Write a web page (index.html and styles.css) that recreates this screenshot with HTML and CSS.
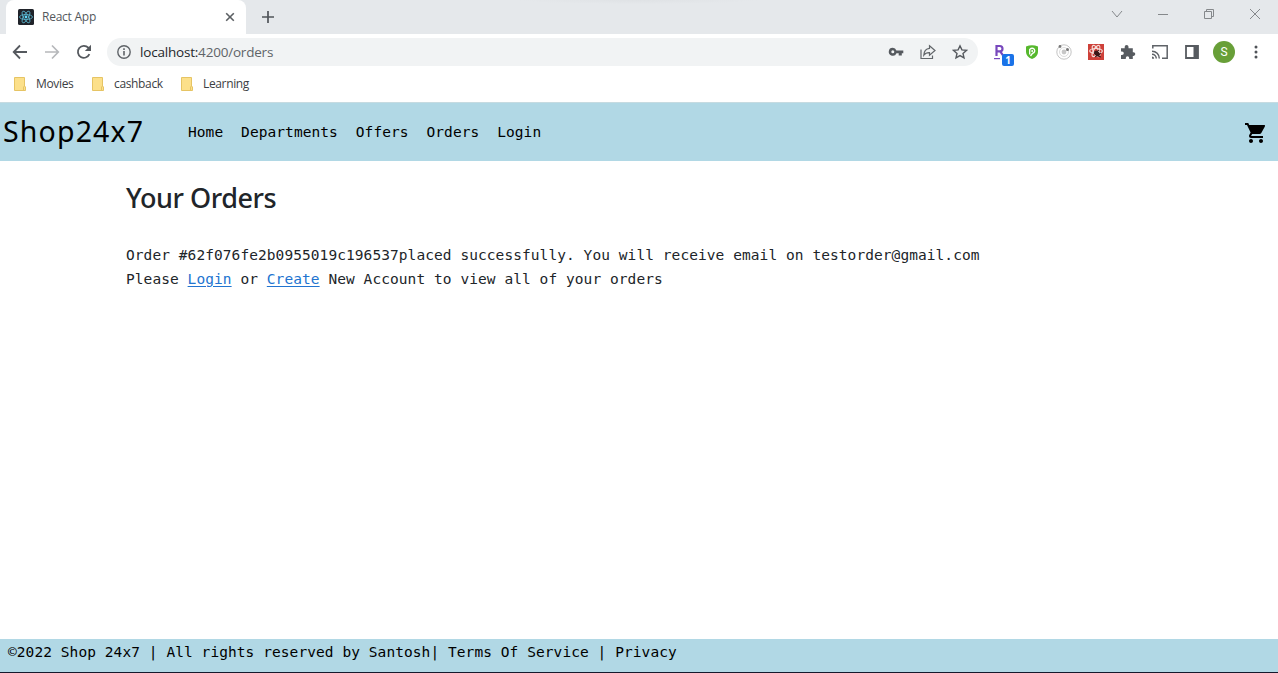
FILE: index.html
```html
<!DOCTYPE html>
<html lang="en">
<head>
<meta charset="utf-8">
<title>React App</title>
<link rel="stylesheet" href="styles.css">
</head>
<body>
<div class="tabstrip">
  <div class="tab">
    <svg class="favicon" width="16" height="16" viewBox="0 0 16 16"><rect width="16" height="16" rx="1.5" fill="#20232a"/><g fill="none" stroke="#58b3cb" stroke-width=".85"><ellipse cx="8" cy="8" rx="6.5" ry="2.5"/><ellipse cx="8" cy="8" rx="6.5" ry="2.5" transform="rotate(60 8 8)"/><ellipse cx="8" cy="8" rx="6.5" ry="2.5" transform="rotate(120 8 8)"/></g><circle cx="8" cy="8" r="1.4" fill="#61dafb"/></svg>
    <span class="tab-title">React App</span>
    <svg class="tab-close" width="10" height="10" viewBox="0 0 10 10"><path d="M1.2 1.2l7.6 7.6M8.8 1.2L1.2 8.8" stroke="#5b5f63" stroke-width="1.6"/></svg>
  </div>
  <svg class="new-tab" width="12" height="12" viewBox="0 0 12 12"><path d="M6 0v12M0 6h12" stroke="#50545a" stroke-width="1.7"/></svg>
  <div class="window-controls">
    <svg width="12" height="12" viewBox="0 0 12 12"><path d="M1 3l5 6 5-6" /></svg>
    <svg width="12" height="12" viewBox="0 0 12 12"><path d="M1 6.5h10" /></svg>
    <svg width="12" height="12" viewBox="0 0 12 12"><path d="M1.5 3.5h7v7h-7zM3.5 3.500v-2h7v7h-2" /></svg>
    <svg width="12" height="12" viewBox="0 0 12 12"><path d="M1 1l10 10M11 1L1 11" /></svg>
  </div>
</div>
<div class="toolbar">
  <div class="nav-buttons">
    <svg width="16" height="16" viewBox="0 0 16 16"><path d="M15 8H2M8 1.500L1.700 8 8 14.500" fill="none" stroke="#55595e" stroke-width="1.800"/></svg>
    <svg width="16" height="16" viewBox="0 0 16 16"><path d="M1 8h13M8 1.500L14.300 8 8 14.500" fill="none" stroke="#b6b8bb" stroke-width="1.700"/></svg>
    <svg width="16" height="16" viewBox="0 0 16 16"><path d="M13.400 10.200A6 6 0 1 1 12.300 3.700L14 5.500" fill="none" stroke="#55595e" stroke-width="1.800"/><path d="M15 .8V7H8.800z" fill="#55595e"/></svg>
  </div>
  <div class="omnibox">
    <svg width="14" height="14" viewBox="0 0 14 14"><circle cx="7" cy="7" r="6.200" fill="none" stroke="#5f6368" stroke-width="1.400"/><path d="M7 6v4.500M7 3.300v1.600" stroke="#5f6368" stroke-width="1.600"/></svg>
    <span class="url"><b>localhost:</b>4200/orders</span>
    <div class="omni-actions">
      <svg width="16" height="16" viewBox="0 0 16 16"><path fill="#55595e" fill-rule="evenodd" d="M4.800 3.800a4 4 0 1 0 3.700 5.400h2.200v2.200h3.100V9.200H15.300V6.400H8.400A4 4 0 0 0 4.800 3.800zm0 2.500a1.500 1.500 0 1 1 0 3 1.500 1.500 0 0 1 0-3z"/></svg>
      <svg width="16" height="16" viewBox="0 0 16 16"><g fill="none" stroke="#62666a" stroke-width="1.200"><path d="M1 5.500v9h11.500v-3"/><path d="M9.500 1.800L15 6.500l-5.500 4.700V8.600C7 8.500 5.200 9.200 3.800 11.200c.2-4 2.400-6.400 5.700-6.800z"/></g></svg>
      <svg width="16" height="16" viewBox="0 0 16 16"><path d="M8 1.800l1.900 4.100 4.500.5-3.400 3 1 4.500-4-2.300-4 2.300 1-4.500-3.400-3 4.500-.5z" fill="none" stroke="#55595e" stroke-width="1.400"/></svg>
    </div>
  </div>
  <div class="extensions">
    <div class="ext">
      <svg width="16" height="16" viewBox="0 0 16 16"><path d="M4.500 12V2h3.300a2.600 2.600 0 0 1 0 5.400H5.300M8.200 7.300l2.800 4" fill="none" stroke="#7848bd" stroke-width="2.200"/><path d="M2 14.600h6" stroke="#7848bd" stroke-width="1.200"/></svg>
      <span class="badge">1</span>
    </div>
    <div class="ext"><svg width="14" height="16" viewBox="0 0 14 16"><path d="M1 2.500Q7 .2 13 2.500V8q0 4.500-6 7Q1 12.500 1 8z" fill="#56b82d"/><path d="M4.700 10.500V5.500Q7 3.200 9.300 5.200 10.800 8 7.500 9.300L5.500 12" fill="none" stroke="#fff" stroke-width="1.300"/><circle cx="7.200" cy="7" r="1" fill="#fff"/></svg></div>
    <div class="ext"><svg width="16" height="16" viewBox="0 0 16 16"><g fill="none" stroke="#c4c4c4"><circle cx="8" cy="8" r="7.200"/><circle cx="8" cy="8" r="4.500" stroke="#ddd"/></g><circle cx="8" cy="8" r="2.400" fill="#c7c7c7"/><circle cx="4" cy="2.500" r="1.400" fill="#777"/><circle cx="11.500" cy="5.500" r="1.500" fill="#777"/></svg></div>
    <div class="ext"><svg width="16" height="16" viewBox="0 0 16 16"><path fill="#ce4039" d="M0 0h16v16H0z"/><g fill="none" stroke="#f5ddd9" stroke-width="1.200"><ellipse cx="8" cy="7" rx="6.300" ry="2.500"/><ellipse cx="8" cy="7" rx="6.300" ry="2.500" transform="rotate(60 8 7)"/><ellipse cx="8" cy="7" rx="6.300" ry="2.500" transform="rotate(120 8 7)"/></g><ellipse cx="9" cy="9.500" rx="2.400" ry="3.300" transform="rotate(-40 9 9.500)" fill="#3a1717"/><path d="M6 10l5-4M7 13l6-4M10 12l3 1" stroke="#3a1717"/></svg></div>
    <div class="ext"><svg width="16" height="16" viewBox="0 0 16 16"><path fill="#575b60" d="M1 4.200h3.700V2.800a1.900 1.900 0 0 1 3.800 0v1.400h4.300v4.100h.7a1.800 1.800 0 0 1 0 3.600h-.7V15H9.200v-1a1.700 1.700 0 0 0-3.400 0v1H1v-4h1a1.800 1.800 0 0 0 0-3.600H1z"/></svg></div>
    <div class="ext"><svg width="16" height="16" viewBox="0 0 16 16"><g fill="none" stroke="#5f6368" stroke-width="1.500"><path d="M.8 4.500V1.800h14.400v12.400H10"/><path d="M0 7.200a7.300 7.300 0 0 1 7.300 7.300M0 10.200a4.300 4.300 0 0 1 4.300 4.300"/></g><path d="M0 12.500a2.200 2.200 0 0 1 2.200 2.200H0z" fill="#5f6368"/></svg></div>
    <div class="ext"><svg width="14" height="14" viewBox="0 0 14 14"><path d="M1 1h12v12H1z" fill="#fff" stroke="#575b60" stroke-width="1.800"/><path d="M8.500 1H13v12H8.500z" fill="#575b60"/></svg></div>
    <div class="ext"><span class="avatar">S</span></div>
    <div class="ext"><svg width="4" height="14" viewBox="0 0 4 14"><g fill="#4f5358"><circle cx="2" cy="2" r="1.500"/><circle cx="2" cy="7" r="1.500"/><circle cx="2" cy="12" r="1.500"/></g></svg></div>
  </div>
</div>
<div class="bookmarks">
  <div class="bookmark bm-movies"><svg width="12" height="14" viewBox="0 0 12 14"><path d="M.5.5h10v8.500l1 1v3.500H.5z" fill="#fce08a" stroke="#e6c464"/><path d="M9.500 13V10l1-1" fill="none" stroke="#e6c464"/></svg><span>Movies</span></div>
  <div class="bookmark bm-cashback"><svg width="12" height="14" viewBox="0 0 12 14"><path d="M.5.5h10v8.500l1 1v3.500H.5z" fill="#fce08a" stroke="#e6c464"/><path d="M9.500 13V10l1-1" fill="none" stroke="#e6c464"/></svg><span>cashback</span></div>
  <div class="bookmark"><svg width="12" height="14" viewBox="0 0 12 14"><path d="M.5.5h10v8.500l1 1v3.500H.5z" fill="#fce08a" stroke="#e6c464"/><path d="M9.500 13V10l1-1" fill="none" stroke="#e6c464"/></svg><span>Learning</span></div>
</div>
<header class="site-header">
  <div class="brand">Shop24x7</div>
  <nav class="menu"><span>Home</span><span>Departments</span><span>Offers</span><span>Orders</span><span>Login</span></nav>
  <svg class="cart" width="24" height="24" viewBox="0 0 24 24"><path d="M7 18c-1.100 0-1.990.9-1.990 2S5.900 22 7 22s2-.9 2-2-.9-2-2-2zM1 2v2h2l3.600 7.590-1.350 2.450c-.16.280-.25.610-.25.960 0 1.100.9 2 2 2h12v-2H7.420c-.14 0-.25-.11-.25-.25l.03-.12.9-1.630h7.450c.75 0 1.410-.41 1.750-1.030l3.580-6.490A1 1 0 0 0 20 4H5.210l-.94-2H1zm16 16c-1.100 0-1.990.9-1.990 2s.89 2 1.990 2 2-.9 2-2-.9-2-2-2z"/></svg>
</header>
<main class="content">
  <h1>Your Orders</h1>
  <p>Order #62f076fe2b0955019c196537placed successfully. You will receive email on testorder@gmail.com</p>
  <p>Please <a href="#">Login</a> or <a href="#">Create</a> New Account to view all of your orders</p>
</main>
<footer class="site-footer">©2022 Shop 24x7 | All rights reserved by Santosh| Terms Of Service | Privacy</footer>
</body>
</html>
```

FILE: styles.css
```css
* { box-sizing: border-box; }
body { margin: 0; height: 673px; display: flex; flex-direction: column; overflow: hidden; background: #fff; font-family: "Noto Sans", sans-serif; }
svg { display: block; flex: none; }
.tabstrip { height: 34px; flex: none; display: flex; align-items: center; padding-left: 6px; background: radial-gradient(ellipse 120px 4px at 638px 0, #dfe2e5, transparent), #e5e8eb; }
.tab { width: 240px; height: 34px; display: flex; align-items: center; padding: 0 11px 0 12px; background: #fff; border-radius: 8px 8px 0 0; }
.tab-title { margin-left: 8px; font-family: "Open Sans", sans-serif; font-size: 12px; line-height: 16px; letter-spacing: -0.25px; color: #54585c; }
.tab-close { margin-left: auto; }
.new-tab { margin-left: 16px; }
.window-controls { margin-left: auto; display: flex; gap: 34px; padding: 0 17px 6px 0; }
.window-controls path { fill: none; stroke: #85888b; stroke-width: 1; }
.toolbar { height: 36px; flex: none; display: flex; align-items: center; padding-left: 12px; }
.nav-buttons { display: flex; gap: 16px; }
.omnibox { width: 871px; height: 28px; margin-left: 15px; display: flex; align-items: center; padding: 0 10px; border-radius: 14px; background: #f1f3f4; }
.url { margin-left: 9px; padding-bottom: 1px; font-family: "Open Sans", sans-serif; font-size: 13.500px; line-height: 18px; letter-spacing: -0.2px; color: #606468; }
.url b { font-weight: 400; color: #24272b; }
.omni-actions { margin-left: auto; display: flex; gap: 16px; }
.extensions { display: flex; margin-left: 6px; }
.ext { width: 32px; height: 28px; display: flex; align-items: center; justify-content: center; position: relative; }
.badge { position: absolute; left: 18px; top: 16px; width: 12px; height: 12px; border-radius: 2px; background: #1a73e8; color: #fff; font: bold 10px/12px "Noto Sans", sans-serif; text-align: center; }
.avatar { width: 22px; height: 22px; border-radius: 50%; background: #689f38; color: #fff; font: 12px/22px Roboto, sans-serif; text-align: center; }
.bookmarks { height: 32px; flex: none; display: flex; align-items: center; padding: 0 0 4px 14px; font-family: "Open Sans", sans-serif; font-size: 12px; line-height: 16px; letter-spacing: -0.35px; color: #3c4043; }
.bookmark { display: flex; align-items: center; gap: 10px; }
.bookmark span { padding-bottom: 1px; }
.bm-movies { width: 78px; }
.bm-cashback { width: 89px; }
.site-header { height: 59px; flex: none; display: flex; align-items: center; padding: 0 10px 0 3px; background: #b1d8e5; border-top: 1px solid #c6dbe1; color: #000; }
.brand { width: 185px; font-size: 28.500px; line-height: 56px; padding-bottom: 2px; letter-spacing: 1.150px; }
.menu { display: flex; gap: 17.900px; }
.menu, .content p, .site-footer { font-family: "DejaVu Sans Mono", monospace; font-size: 14.500px; letter-spacing: 0.070px; white-space: pre; }
.cart { margin: 2px 0 0 auto; }
.content { flex: 1; padding: 18px 126px 0; color: #212529; }
h1 { margin: 0 0 26px; font-size: 27px; font-weight: 500; line-height: 38px; letter-spacing: -0.450px; }
.content p { margin: 0; line-height: 24px; }
.content a { color: #2274d0; text-decoration: underline; text-underline-offset: 2px; }
.site-footer { height: 34px; flex: none; padding-left: 8px; line-height: 26px; background: #b1d8e5; border-bottom: 1px solid #15192c; color: #000; }
```
